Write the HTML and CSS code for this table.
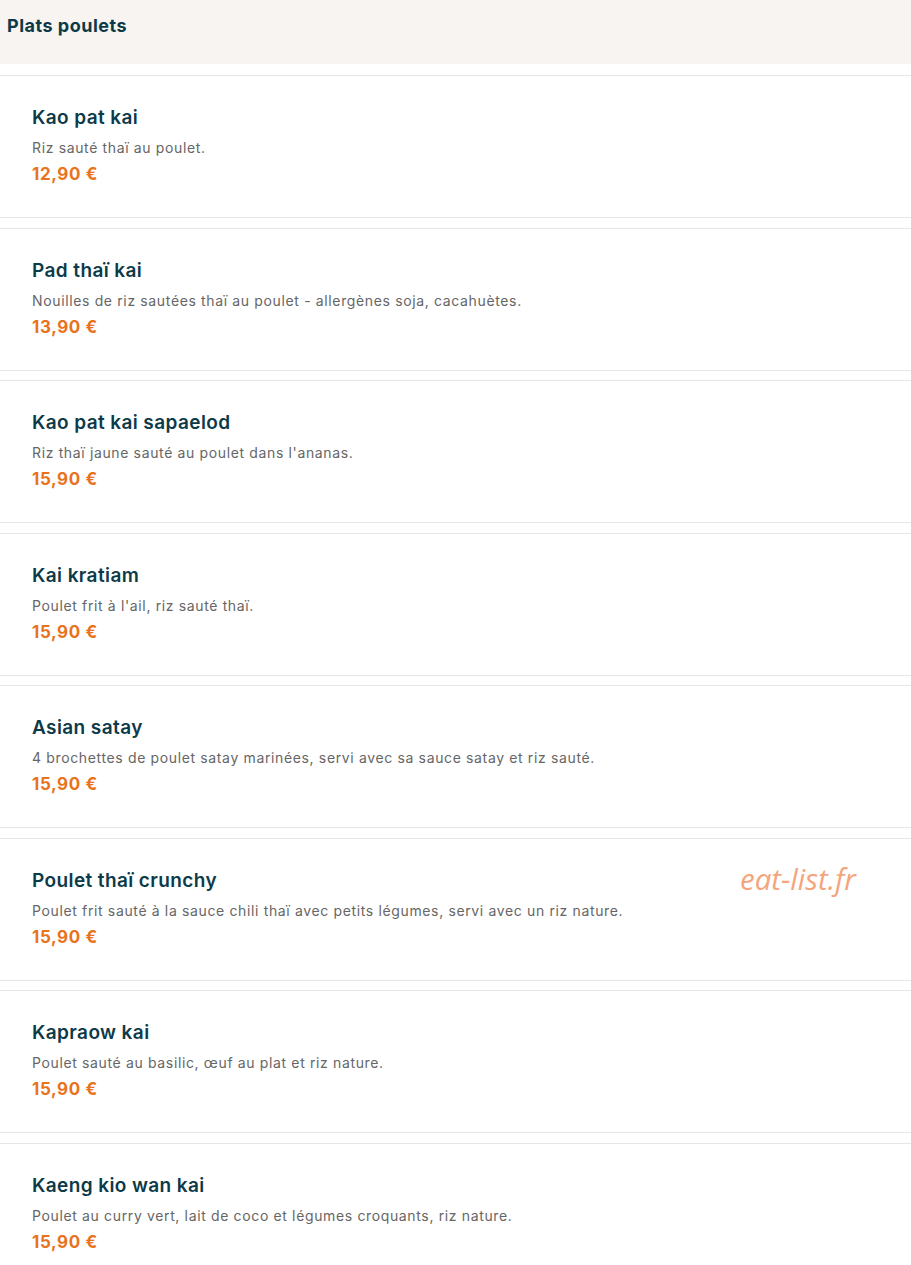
FILE: index.html
```html
<!DOCTYPE html>
<html lang="fr">
<head>
<meta charset="utf-8">
<title>Plats poulets</title>
<link rel="stylesheet" href="styles.css">
</head>
<body>
<header class="cat-header"><h2 class="cat-title">Plats poulets</h2></header>
<main class="list">
  <article class="dish"><h3 class="dish-name">Kao pat kai</h3><p class="dish-desc">Riz sauté thaï au poulet.</p><div class="dish-price">12,90 €</div></article>
  <article class="dish"><h3 class="dish-name">Pad thaï kai</h3><p class="dish-desc">Nouilles de riz sautées thaï au poulet - allergènes soja, cacahuètes.</p><div class="dish-price">13,90 €</div></article>
  <article class="dish"><h3 class="dish-name">Kao pat kai sapaelod</h3><p class="dish-desc">Riz thaï jaune sauté au poulet dans l'ananas.</p><div class="dish-price">15,90 €</div></article>
  <article class="dish"><h3 class="dish-name">Kai kratiam</h3><p class="dish-desc">Poulet frit à l'ail, riz sauté thaï.</p><div class="dish-price">15,90 €</div></article>
  <article class="dish"><h3 class="dish-name">Asian satay</h3><p class="dish-desc">4 brochettes de poulet satay marinées, servi avec sa sauce satay et riz sauté.</p><div class="dish-price">15,90 €</div></article>
  <article class="dish"><h3 class="dish-name">Poulet thaï crunchy</h3><p class="dish-desc">Poulet frit sauté à la sauce chili thaï avec petits légumes, servi avec un riz nature.</p><div class="dish-price">15,90 €</div><span class="watermark">eat-list.fr</span></article>
  <article class="dish"><h3 class="dish-name">Kapraow kai</h3><p class="dish-desc">Poulet sauté au basilic, œuf au plat et riz nature.</p><div class="dish-price">15,90 €</div></article>
  <article class="dish"><h3 class="dish-name">Kaeng kio wan kai</h3><p class="dish-desc">Poulet au curry vert, lait de coco et légumes croquants, riz nature.</p><div class="dish-price">15,90 €</div></article>
</main>
</body>
</html>
```
FILE: styles.css
```css
html, body {
  margin: 0;
  padding: 0;
  background: #ffffff;
  font-family: "Inter", "Noto Sans", sans-serif;
}
.cat-header {
  background: #f7f4f1;
  height: 64px;
  padding: 0 7px;
  display: flex;
  align-items: flex-start;
}
.cat-title {
  margin: 15px 0 0;
  font-size: 18px;
  line-height: 22px;
  font-weight: 700;
  letter-spacing: 0.5px;
  color: #0d3a48;
}
.list {
  margin-top: 11px;
}
.dish {
  position: relative;
  border-top: 1px solid #e6e6e6;
  border-bottom: 1px solid #e6e6e6;
  padding: 30px 32px 31px;
  margin-bottom: 9.5px;
}
.dish-name {
  margin: 0;
  font-size: 19px;
  line-height: 24px;
  font-weight: 600;
  letter-spacing: 0.4px;
  color: #0d3a48;
}
.dish-desc {
  margin: 8px 0 0;
  font-size: 14px;
  line-height: 20px;
  letter-spacing: 0.64px;
  color: #666666;
}
.dish-price {
  margin-top: 4px;
  font-size: 17px;
  line-height: 24px;
  font-weight: 700;
  letter-spacing: 0.6px;
  color: #e8731c;
}
.watermark {
  position: absolute;
  left: 740px;
  top: 19px;
  font-family: "Open Sans", sans-serif;
  font-style: italic;
  font-size: 29.5px;
  color: #f4a57c;
}
```
